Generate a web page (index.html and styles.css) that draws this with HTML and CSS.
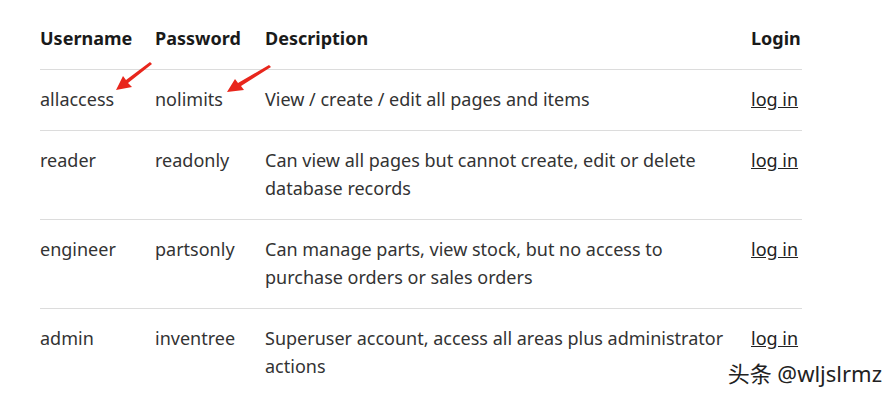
FILE: index.html
```html
<!DOCTYPE html>
<html lang="en">
    <head>
        <meta charset="UTF-8">
        <link rel="stylesheet" href="styles.css">
        <title>Demo accounts</title>
    </head>
    <body>
        <div class="wrap">
            <table class="accounts">
                <colgroup>
                    <col class="c-user">
                    <col class="c-pass">
                    <col class="c-desc">
                    <col class="c-login">
                </colgroup>
                <thead>
                    <tr>
                        <th>Username</th>
                        <th>Password</th>
                        <th>Description</th>
                        <th>Login</th>
                    </tr>
                </thead>
                <tbody>
                    <tr>
                        <td>allaccess</td>
                        <td>nolimits</td>
                        <td>View / create / edit all pages and items</td>
                        <td><a href="#">log in</a></td>
                    </tr>
                    <tr>
                        <td>reader</td>
                        <td>readonly</td>
                        <td>Can view all pages but cannot create, edit or delete database records</td>
                        <td><a href="#">log in</a></td>
                    </tr>
                    <tr>
                        <td>engineer</td>
                        <td>partsonly</td>
                        <td>Can manage parts, view stock, but no access to purchase orders or sales orders</td>
                        <td><a href="#">log in</a></td>
                    </tr>
                    <tr>
                        <td>admin</td>
                        <td>inventree</td>
                        <td>Superuser account, access all areas plus administrator actions</td>
                        <td><a href="#">log in</a></td>
                    </tr>
                </tbody>
            </table>

            <svg class="arrow arrow-1" width="40" height="32" viewBox="0 0 40 32">
                <path d="M37 2 L13 21 L17 25 L1 28 L8 14 L11 18 L35 0 Z" fill="#e8261c"/>
            </svg>
            <svg class="arrow arrow-2" width="48" height="32" viewBox="0 0 48 32">
                <path d="M45 2 L15 21 L18 25 L1 27 L9 14 L12 18 L43 0 Z" fill="#e8261c"/>
            </svg>
        </div>

        <div class="watermark">头条 @wljslrmz</div>
    </body>
</html>
```

FILE: styles.css
```css
body {
    margin: 8px 0 0 0;
    font-family: "Noto Sans", Arial, sans-serif;
    background-color: #fff;
    color: #333;
    overflow: hidden;
}

.wrap {
    position: relative;
    margin-left: 40px;
    width: 762px;
}

.accounts {
    width: 762px;
    border-collapse: collapse;
    table-layout: fixed;
    font-size: 18px;
    line-height: 28px;
}

.c-user { width: 115px; }
.c-pass { width: 110px; }
.c-desc { width: 486px; }
.c-login { width: 51px; }

.accounts th {
    text-align: left;
    font-weight: bold;
    color: #1a1a1a;
    padding: 16px 10px 17px 0;
}

.accounts td {
    vertical-align: top;
    padding: 15px 10px 17px 0;
    border-top: 1px solid #dcdcdc;
}

.accounts th:last-child,
.accounts td:last-child {
    padding-right: 0;
    white-space: nowrap;
}

.accounts a {
    color: #222;
    text-decoration: underline;
}

.arrow {
    position: absolute;
}

.arrow-1 {
    left: 75px;
    top: 54px;
}

.arrow-2 {
    left: 186px;
    top: 57px;
}

.watermark {
    position: absolute;
    right: 12px;
    bottom: 10px;
    font-size: 22px;
    color: #222;
    font-family: "Noto Sans", "Noto Sans CJK SC", sans-serif;
    text-shadow: 0 0 2px #fff;
}
```
